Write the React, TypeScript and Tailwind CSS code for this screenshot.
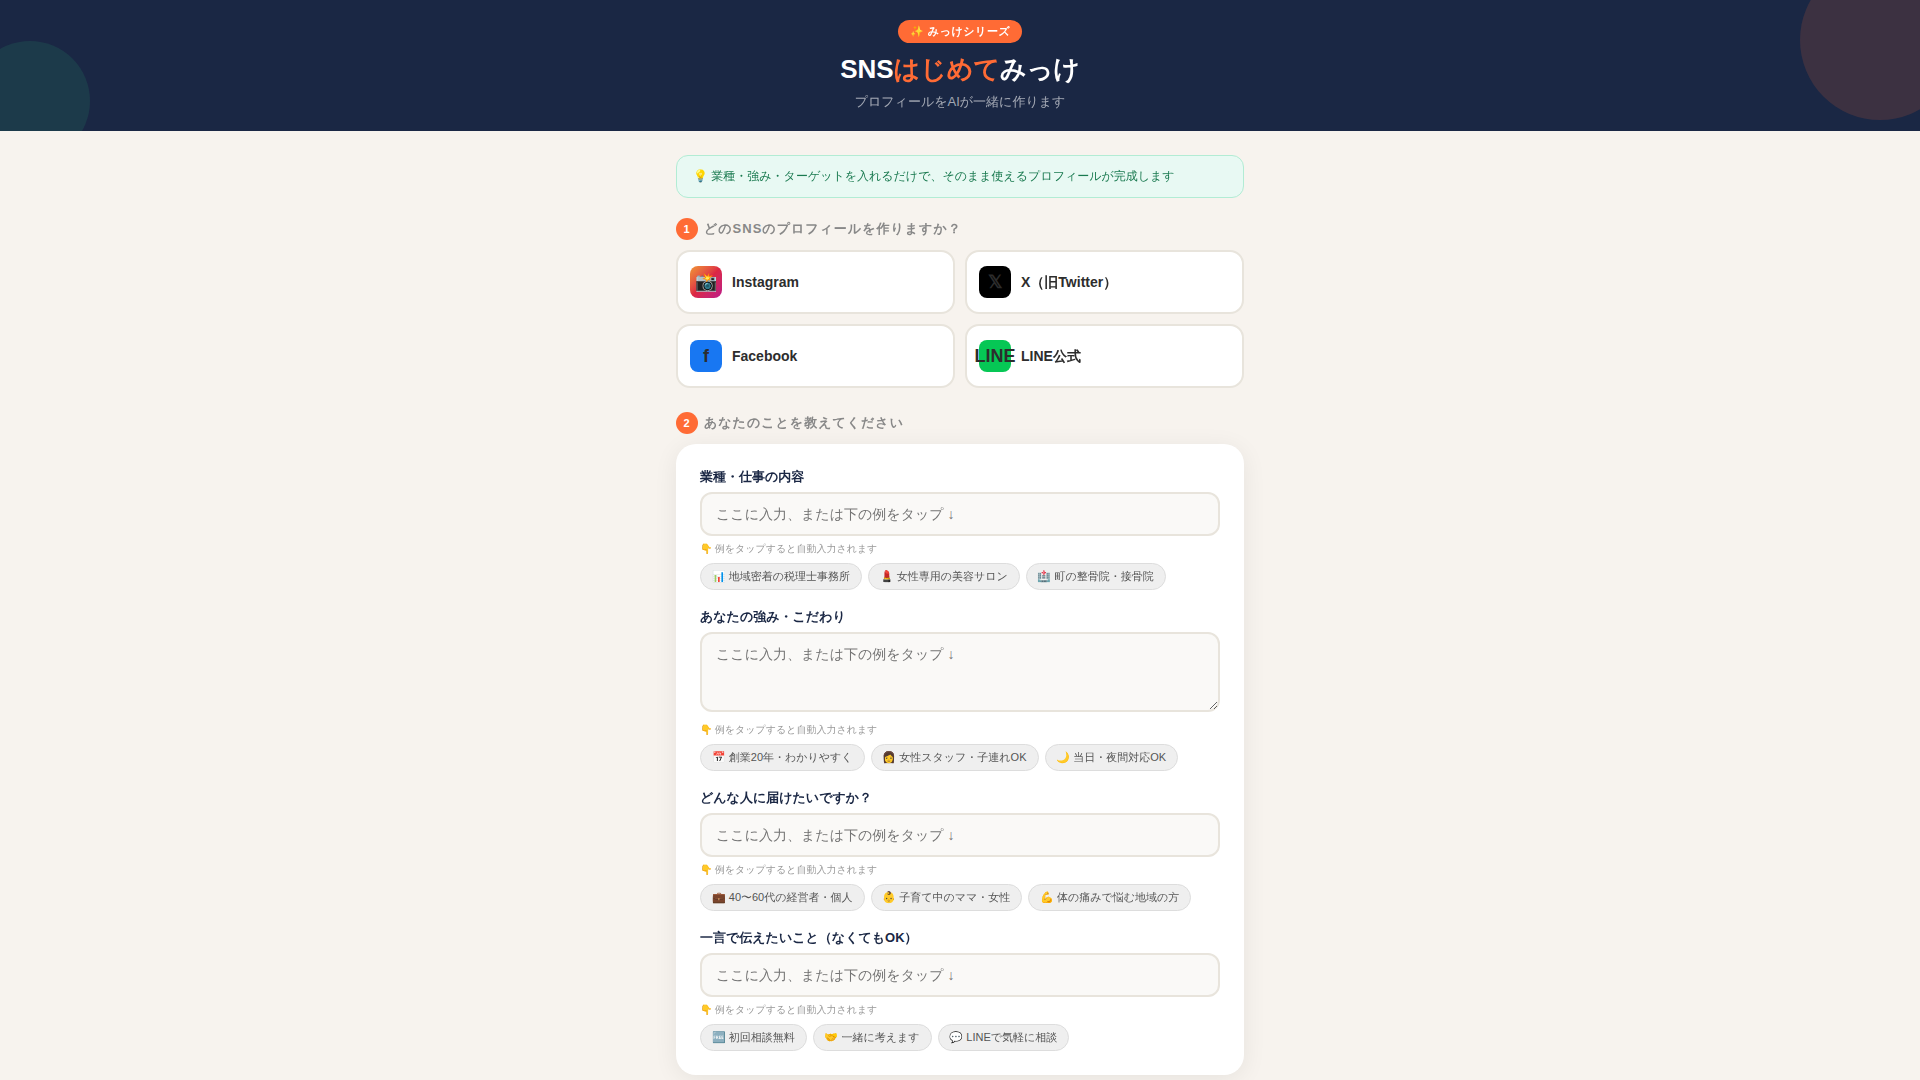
import { useState } from "react";

type Field = {
  id: string;
  label: string;
  multiline?: boolean;
  examples: { icon: string; text: string }[];
};

const platforms = [
  { id: "instagram", icon: "📸", name: "Instagram", tile: "bg-linear-135 from-[#f09433] via-[#dc2743] to-[#bc1888]" },
  { id: "x", icon: "𝕏", name: "X（旧Twitter）", tile: "bg-black" },
  { id: "facebook", icon: "f", name: "Facebook", tile: "bg-[#1877f2]" },
  { id: "line", icon: "LINE", name: "LINE公式", tile: "bg-[#06c755]" },
];

const fields: Field[] = [
  {
    id: "business",
    label: "業種・仕事の内容",
    examples: [
      { icon: "📊", text: "地域密着の税理士事務所" },
      { icon: "💄", text: "女性専用の美容サロン" },
      { icon: "🏥", text: "町の整骨院・接骨院" },
    ],
  },
  {
    id: "strength",
    label: "あなたの強み・こだわり",
    multiline: true,
    examples: [
      { icon: "📅", text: "創業20年・わかりやすく" },
      { icon: "👩", text: "女性スタッフ・子連れOK" },
      { icon: "🌙", text: "当日・夜間対応OK" },
    ],
  },
  {
    id: "target",
    label: "どんな人に届けたいですか？",
    examples: [
      { icon: "💼", text: "40〜60代の経営者・個人" },
      { icon: "👶", text: "子育て中のママ・女性" },
      { icon: "💪", text: "体の痛みで悩む地域の方" },
    ],
  },
  {
    id: "message",
    label: "一言で伝えたいこと（なくてもOK）",
    examples: [
      { icon: "🆓", text: "初回相談無料" },
      { icon: "🤝", text: "一緒に考えます" },
      { icon: "💬", text: "LINEで気軽に相談" },
    ],
  },
];

const placeholder = "ここに入力、または下の例をタップ ↓";

function StepHeading({ step, children }: { step: number; children: string }) {
  return (
    <h2 className="mb-2.5 flex items-center gap-1.5 text-[13px] leading-[22px] font-extrabold tracking-[1px] text-[#888888]">
      <span className="flex size-[22px] shrink-0 items-center justify-center rounded-full bg-[#ff6b35] text-[11px] text-white">
        {step}
      </span>
      {children}
    </h2>
  );
}

function FormField({ field }: { field: Field }) {
  const [value, setValue] = useState("");
  const box =
    "block w-full rounded-xl border-2 border-[#e8e4dc] bg-[#faf9f7] px-3.5 py-2.5 text-sm leading-5 text-[#2d2d2d] outline-none placeholder:text-[#757575] focus:border-[#ff6b35]";
  return (
    <div>
      <label htmlFor={field.id} className="mb-1.5 block text-[13px] leading-[18px] font-extrabold text-[#1a2744]">
        {field.label}
      </label>
      {field.multiline ? (
        <textarea
          id={field.id}
          value={value}
          onChange={(e) => setValue(e.target.value)}
          placeholder={placeholder}
          className={`${box} mb-2.5 h-20 resize-y`}
        />
      ) : (
        <input
          id={field.id}
          type="text"
          value={value}
          onChange={(e) => setValue(e.target.value)}
          placeholder={placeholder}
          className={box}
        />
      )}
      <p className="mt-[5px] mb-[7px] text-[10px] leading-[15px] text-[#999999]">👇 例をタップすると自動入力されます</p>
      <div className="flex flex-wrap gap-1.5">
        {field.examples.map((ex) => (
          <button
            key={ex.text}
            type="button"
            onClick={() => setValue(ex.text)}
            className="rounded-full border border-[#dddddd] bg-[#efefef] px-[11px] py-[5px] text-[11px] leading-[15px] text-[#555555]"
          >
            <span className="font-['Noto_Color_Emoji',sans-serif]">{ex.icon}</span> {ex.text}
          </button>
        ))}
      </div>
    </div>
  );
}

export default function App() {
  const [selected, setSelected] = useState("");
  return (
    <div
      lang="ja"
      className="min-h-screen bg-[#f7f3ee] font-['Liberation_Sans','WenQuanYi_Zen_Hei','Noto_Sans_CJK_JP',sans-serif] text-[#2d2d2d]"
    >
      <header className="relative overflow-hidden bg-[#1a2744] px-4 py-5 text-center">
        <div className="absolute -top-10 -right-10 size-40 rounded-full bg-[#ff6b35]/15" />
        <div className="absolute -bottom-[30px] -left-[30px] size-[120px] rounded-full bg-[#2ec27e]/12" />
        <div className="relative flex flex-col items-center">
          <span className="rounded-full bg-[#ff6b35] px-3 py-1 text-[11px] leading-[15px] font-extrabold tracking-wider text-white">
            ✨ みっけシリーズ
          </span>
          <h1 className="mt-2 text-[26px] leading-9 font-extrabold text-white">
            SNS<span className="text-[#ff6b35]">はじめて</span>みっけ
          </h1>
          <p className="mt-1.5 text-[13px] leading-[18px] text-white/60">プロフィールをAIが一緒に作ります</p>
        </div>
      </header>

      <main className="mx-auto max-w-[600px] px-4 pt-6">
        <p className="mb-5 rounded-xl border border-[#b2ecd4] bg-[#e8f9f3] px-4 py-3 text-xs leading-[17px] text-[#1a7a50]">
          💡 業種・強み・ターゲットを入れるだけで、そのまま使えるプロフィールが完成します
        </p>

        <section className="mb-6">
          <StepHeading step={1}>どのSNSのプロフィールを作りますか？</StepHeading>
          <div className="grid grid-cols-2 gap-2.5">
            {platforms.map((p) => (
              <button
                key={p.id}
                type="button"
                aria-pressed={selected === p.id}
                onClick={() => setSelected(p.id)}
                className="flex items-center gap-2.5 rounded-[14px] border-2 border-[#e8e4dc] bg-white px-3 py-3.5 text-left text-sm font-extrabold aria-pressed:border-[#ff6b35]"
              >
                <span className={`flex size-8 shrink-0 items-center justify-center rounded-lg text-lg ${p.tile}`}>
                  {p.icon}
                </span>
                {p.name}
              </button>
            ))}
          </div>
        </section>

        <section>
          <StepHeading step={2}>あなたのことを教えてください</StepHeading>
          <form className="flex flex-col gap-[18px] rounded-[20px] bg-white p-6 shadow-[0_4px_24px_rgba(0,0,0,0.07)]">
            {fields.map((f) => (
              <FormField key={f.id} field={f} />
            ))}
          </form>
        </section>
      </main>
    </div>
  );
}
